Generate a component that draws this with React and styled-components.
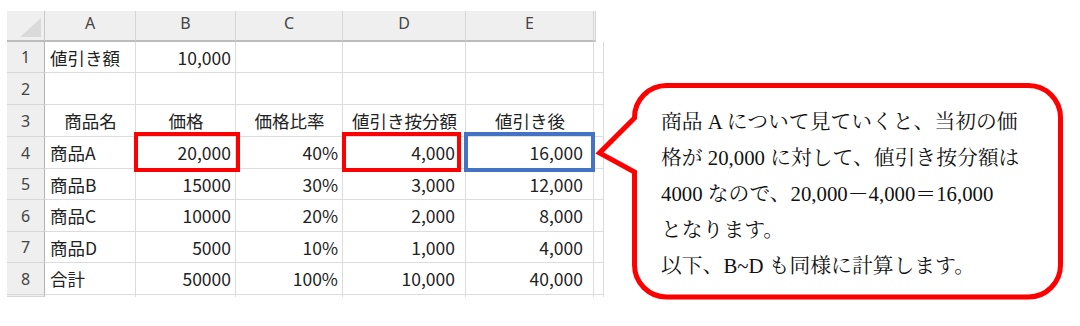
import React from 'react'
import styled, { createGlobalStyle } from 'styled-components'

const GlobalStyle = createGlobalStyle`
  * {
    box-sizing: border-box;
  }

  body {
    margin: 0;
    background: #fff;
  }
`

const COLS = [38, 91, 100, 107, 123, 128, 2]
const ROWS = [31, 31, 32, 32, 32, 31, 32, 31, 32, 2]
// right padding per column for numbers (D and E carry a trailing space in their format)
const PADS = [4, 4, 4, 10, 10, 4]

const rows = [
  ['値引き額', '10,000', '', '', ''],
  ['', '', '', '', ''],
  ['商品名', '価格', '価格比率', '値引き按分額', '値引き後'],
  ['商品A', '20,000', '40%', '4,000', '16,000'],
  ['商品B', '15000', '30%', '3,000', '12,000'],
  ['商品C', '10000', '20%', '2,000', '8,000'],
  ['商品D', '5000', '10%', '1,000', '4,000'],
  ['合計', '50000', '100%', '10,000', '40,000']
]

// highlight boxes drawn over row 4
const marks = {
  '3-1': { color: '#ff0000', l: -2, r: -5 },
  '3-3': { color: '#ff0000', l: -1, r: 4 },
  '3-4': { color: '#4472c4', l: -2, r: -2 }
}

const Page = styled.div`
  display: flex;
  align-items: flex-start;
  padding: 11px 0 0 7px;
`

const Sheet = styled.div`
  display: grid;
  grid-template-columns: ${COLS.map(c => `${c}px`).join(' ')};
  grid-template-rows: ${ROWS.map(r => `${r}px`).join(' ')};
  font-family: "Noto Sans CJK JP", sans-serif;
  font-size: 17.5px;
  color: #222;
`

const Corner = styled.div`
  position: relative;
  background: #efefef;
  border-right: 1px solid #c8c8c8;
  border-bottom: 2px solid #bcbcbc;

  &::after {
    content: '';
    position: absolute;
    right: 3px;
    bottom: 3px;
    border-left: 21px solid transparent;
    border-bottom: 19px solid #dadada;
  }
`

const ColHead = styled.div`
  display: flex;
  align-items: center;
  justify-content: center;
  padding-bottom: 5px;
  background: #efefef;
  border-right: 1px solid #d6d6d6;
  border-bottom: 2px solid #bcbcbc;
  font-family: "Noto Sans", sans-serif;
  font-size: 16px;
  color: #444;
`

const RowHead = styled.div`
  display: flex;
  align-items: center;
  justify-content: center;
  background: #efefef;
  border-right: 1px solid #b4b4b4;
  border-bottom: 1px solid #d6d6d6;
  font-family: "Noto Sans", sans-serif;
  font-size: 16px;
  color: #444;
`

const Cell = styled.div`
  position: relative;
  display: flex;
  align-items: center;
  justify-content: ${props => props.$align};
  padding: 0 ${props => props.$align === 'flex-end' ? props.$pad : 4}px 0 5px;
  border-right: 1px solid #dcdcdc;
  border-bottom: ${props => props.$last ? 'none' : '1px solid #dcdcdc'};
  white-space: nowrap;
`

const Mark = styled.div`
  position: absolute;
  z-index: 1;
  top: -5px;
  bottom: -4px;
  left: ${props => props.$l}px;
  right: ${props => props.$r}px;
  border: 4px solid ${props => props.$color};
`

const Callout = styled.div`
  position: relative;
  flex: none;
  width: 472px;
  height: 224px;
  margin: 69px 0 0 -1px;
  padding: 24px 0 0 66px;
`

const Bubble = styled.svg`
  position: absolute;
  inset: 0;
`

const Line = styled.div`
  position: relative;
  height: 36px;
  line-height: 36px;
  white-space: nowrap;
  font-family: "Liberation Serif", "Noto Serif CJK JP", "Noto Sans CJK JP", serif;
  font-size: 20.8px;
  color: #111;
`

const lines = [
  '商品 A について見ていくと、当初の価',
  '格が 20,000 に対して、値引き按分額は',
  '4000 なので、20,000－4,000＝16,000',
  'となります。',
  '以下、B~D も同様に計算します。'
]

const align = (r, c) => {
  if (r === 2) return 'center'
  return c === 0 ? 'flex-start' : 'flex-end'
}

const App = () => {
  const bodyRows = [...rows, null]

  return (
    <React.Fragment>
      <GlobalStyle />
      <Page>
        <Sheet>
          <Corner />
          {['A', 'B', 'C', 'D', 'E', ''].map((h, i) =>
            <ColHead key={i}>{h}</ColHead>
          )}
          {bodyRows.map((row, r) =>
            <React.Fragment key={r}>
              <RowHead>{row ? r + 1 : ''}</RowHead>
              {[0, 1, 2, 3, 4, 5].map(c => {
                const m = marks[`${r}-${c}`]
                return (
                  <Cell
                    key={c}
                    $align={row ? align(r, c) : 'flex-start'}
                    $pad={PADS[c]}
                    $last={!row}
                  >
                    {row && c < 5 ? row[c] : ''}
                    {m && <Mark $color={m.color} $l={m.l} $r={m.r} />}
                  </Cell>
                )
              })}
            </React.Fragment>
          )}
        </Sheet>
        <Callout>
          <Bubble width="472" height="224" viewBox="0 0 472 224">
            <path
              d="M 71.5 5.5 H 433.5 A 32 32 0 0 1 465.5 37.5 V 185 A 32 32 0 0 1 433.5 217 H 71.5 A 32 32 0 0 1 39.5 185 V 92 L 4.5 73 L 39.5 38 V 37.5 A 32 32 0 0 1 71.5 5.5 Z"
              fill="#fff"
              stroke="#ff0000"
              strokeWidth="5"
              strokeLinejoin="miter"
            />
          </Bubble>
          {lines.map(l => <Line key={l}>{l}</Line>)}
        </Callout>
      </Page>
    </React.Fragment>
  )
}

export default App
